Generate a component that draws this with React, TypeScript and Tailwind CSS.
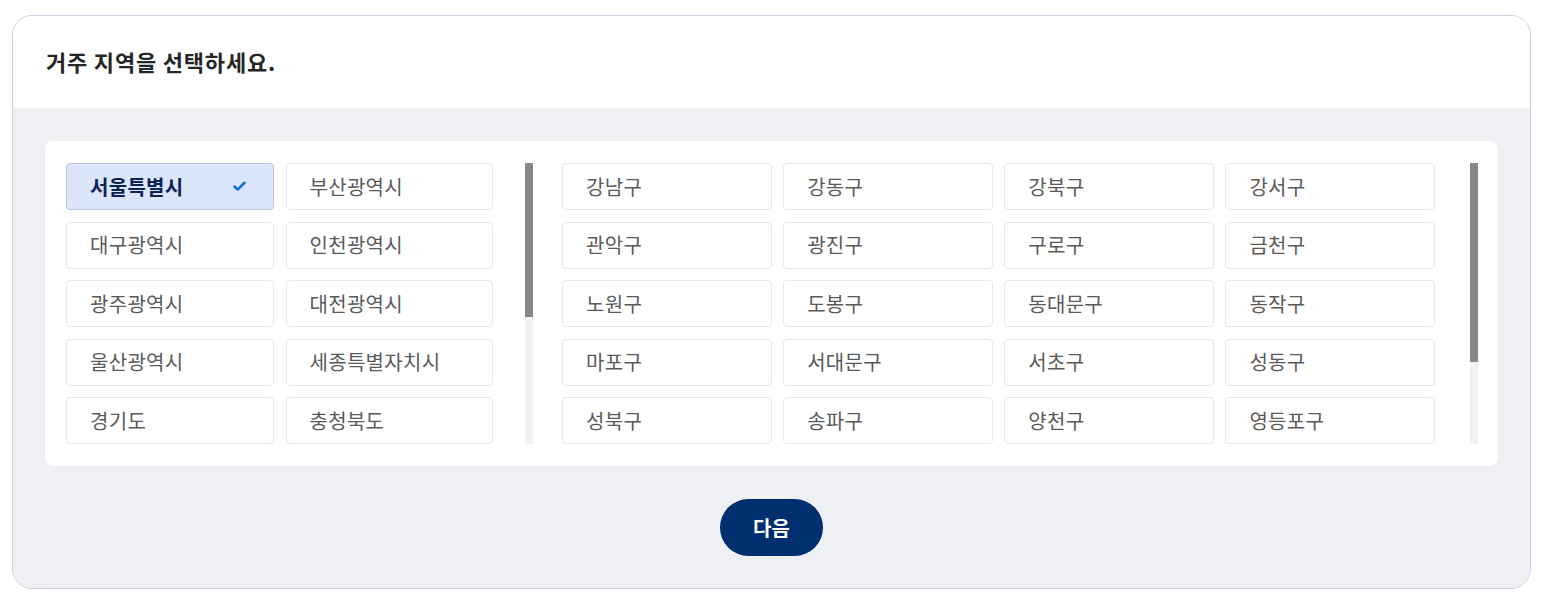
import { Check } from 'lucide-react';

const sidoList = [
  '서울특별시', '부산광역시', '대구광역시', '인천광역시', '광주광역시', '대전광역시',
  '울산광역시', '세종특별자치시', '경기도', '충청북도', '충청남도', '전라북도',
  '전라남도', '경상북도', '경상남도', '제주특별자치도', '강원특별자치도',
];

const guList = [
  '강남구', '강동구', '강북구', '강서구', '관악구', '광진구', '구로구', '금천구',
  '노원구', '도봉구', '동대문구', '동작구', '마포구', '서대문구', '서초구', '성동구',
  '성북구', '송파구', '양천구', '영등포구', '용산구', '은평구', '종로구', '중구', '중랑구',
];

// scrollbars drawn by hand, headless browser hides native ones
function ScrollTrack({ thumb }: { thumb: string }) {
  return (
    <div className="w-[8px] h-[281px] bg-[#f1f1f1] shrink-0">
      <div className={`w-full bg-[#888888] ${thumb}`} />
    </div>
  );
}

export default function App() {
  const selected = '서울특별시';

  return (
    <div className="min-h-screen bg-white pt-[15px] pl-[12px] pr-[15px] font-['Noto_Sans_CJK_KR','Noto_Sans',sans-serif]">
      <div className="h-[574px] rounded-[20px] border border-[#c9cfdf] overflow-hidden flex flex-col">
        <div className="h-[92px] bg-white flex items-center px-[33px] pb-[2px]">
          <h2 className="text-[22px] font-bold text-[#262626] tracking-[0.8px]">거주 지역을 선택하세요.</h2>
        </div>

        <div className="flex-1 bg-[#eff0f4] px-[32px] pt-[33px] flex flex-col items-center">
          <div className="w-full bg-white rounded-[8px] py-[22px] px-[21px] flex">
            {/* 시/도 */}
            <div className="h-[281px] overflow-hidden w-[427px] shrink-0">
              <div className="grid grid-cols-2 gap-x-[12px] gap-y-[11.5px]">
                {sidoList.map((s) => {
                  const isSelected = s === selected;
                  return (
                    <button
                      key={s}
                      className={`h-[47px] rounded-[4px] border flex items-center justify-between pl-[23px] pr-[26px] text-[20px] text-left tracking-[0.3px] ${
                        isSelected
                          ? 'bg-[#dce6fb] border-[#b8c6df] text-[#0e2455] font-bold'
                          : 'bg-white border-[#e6e7eb] text-[#5a5a5a]'
                      }`}
                    >
                      <span>{s}</span>
                      {isSelected && <Check className="w-[15px] h-[15px] text-[#1668dc]" strokeWidth={4} />}
                    </button>
                  );
                })}
              </div>
            </div>
            <div className="ml-[32px] mr-[29px]">
              <ScrollTrack thumb="h-[154px]" />
            </div>

            {/* 시/군/구 */}
            <div className="h-[281px] overflow-hidden w-[873px] shrink-0">
              <div className="grid grid-cols-4 gap-x-[11.5px] gap-y-[11.5px]">
                {guList.map((g) => (
                  <button
                    key={g}
                    className="h-[47px] rounded-[4px] border border-[#e6e7eb] bg-white flex items-center pl-[23px] text-[20px] text-[#5a5a5a] text-left tracking-[0.3px]"
                  >
                    {g}
                  </button>
                ))}
              </div>
            </div>
            <div className="ml-[35px]">
              <ScrollTrack thumb="h-[199px]" />
            </div>
          </div>

          <button className="mt-[33px] w-[103px] h-[57px] rounded-full bg-[#002f6f] text-white text-[20px] font-bold">
            다음
          </button>
        </div>
      </div>
    </div>
  );
}
